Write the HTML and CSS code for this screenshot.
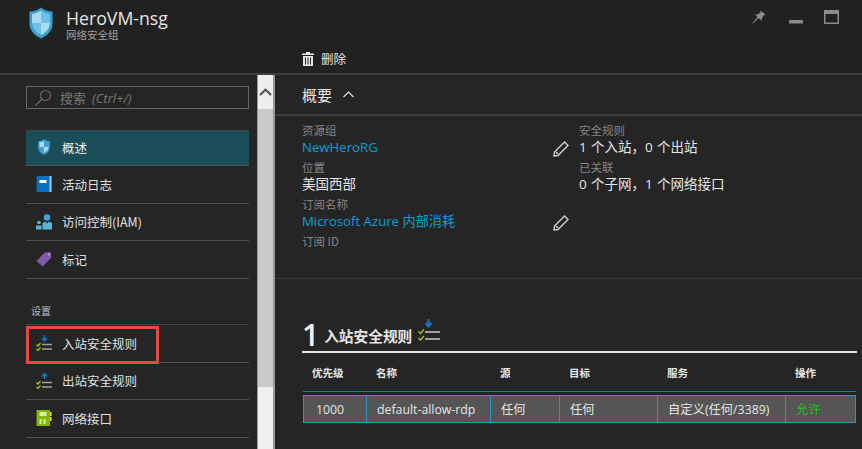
FILE: index.html
```html
<!DOCTYPE html>
<html lang="zh">
<head>
<meta charset="utf-8">
<title>HeroVM-nsg</title>
<link rel="stylesheet" href="styles.css">
</head>
<body>
<div class="app">
  <header class="top">
    <svg class="logo" width="26" height="32" viewBox="0 0 26 32"><path d="M13 0.5C10 3 6 4.500 1.500 4.500V17C1.500 24 7 28.500 13 31.500C19 28.500 24.500 24 24.500 17V4.500C20 4.500 16 3 13 0.500Z" fill="#3b9fd1"/><path d="M13 3.500C10.500 5.500 7.500 6.500 4 7V16H13ZM13 16V28C17 26 21.500 22.500 22 16Z" fill="#a9dcf0"/><path d="M13 3.500V16H22V7C18.500 6.500 15.500 5.500 13 3.500ZM4 16C4.500 22.500 9 26 13 28V16Z" fill="#6fc0e4"/></svg>
    <div class="titles">
      <div class="title">HeroVM-nsg</div>
      <div class="subtitle">网络安全组</div>
    </div>
    <div class="winbtns">
      <svg class="pin" width="14" height="14" viewBox="0 0 14 14"><path d="M8.500 0.500L13.500 4.500L11.500 5.500L9.500 9L10 11L6.500 8L1 13.500L0.500 13L5.500 7L3 4.500L5.500 4.500L8.500 2.500Z" fill="#8c8c8c"/></svg>
      <svg width="14" height="14" viewBox="0 0 14 14"><rect y="10" width="14" height="3.500" fill="#8c8c8c"/></svg>
      <svg width="15" height="14" viewBox="0 0 15 14"><path d="M0 0H15V14H0ZM1.500 4V12.500H13.500V4Z" fill="#8c8c8c" fill-rule="evenodd"/></svg>
    </div>
    <div class="cmd">
      <svg width="12" height="14" viewBox="0 0 12 14"><path d="M4 0H8V1.500H12V3H0V1.500H4ZM1 4H11V14H1ZM3 5.500V12.500H4V5.500ZM5.500 5.500V12.500H6.500V5.500ZM8 5.500V12.500H9V5.500Z" fill="#e6e6e6" fill-rule="evenodd"/></svg>
      <span>删除</span>
    </div>
  </header>
  <div class="main">
    <nav class="side">
      <div class="search">
        <svg width="18" height="18" viewBox="0 0 18 18"><circle cx="11.500" cy="6.500" r="5" fill="none" stroke="#666" stroke-width="1.200"/><path d="M8 10L1.500 16.500" stroke="#666" stroke-width="1.400"/></svg>
        <span>搜索</span><em>(Ctrl+/)</em>
      </div>
      <a class="item active">
        <svg class="ico" width="14" height="16" viewBox="0 0 26 32"><path d="M13 0.500C10 3 6 4.500 1.500 4.500V17C1.500 24 7 28.500 13 31.500C19 28.500 24.500 24 24.500 17V4.500C20 4.500 16 3 13 0.500Z" fill="#3b9fd1"/><path d="M13 3.500C10.500 5.500 7.500 6.500 4 7V16H13ZM13 16V28C17 26 21.500 22.500 22 16Z" fill="#a9dcf0"/></svg>
        <span>概述</span>
      </a>
      <a class="item">
        <svg class="ico" width="15" height="16" viewBox="0 0 15 16"><rect width="15" height="16" rx="1" fill="#0a6fc2"/><rect x="13" width="2" height="16" fill="#9cc9e8"/><rect x="3" y="4" width="7" height="3" fill="#fff"/></svg>
        <span>活动日志</span>
      </a>
      <a class="item">
        <svg class="ico" width="16" height="16" viewBox="0 0 16 16"><circle cx="11" cy="3.500" r="3.200" fill="#3da5d9"/><path d="M6.500 15.500V9L9 7.500L11 9.500L13 7.500L16 9V15.500Z" fill="#59b4d9"/><circle cx="3" cy="8.500" r="1.800" fill="#59b4d9"/><path d="M0 15.500V11.500H5.500V15.500Z" fill="#59b4d9"/></svg>
        <span>访问控制(IAM)</span>
      </a>
      <a class="item">
        <svg class="ico" width="17" height="16" viewBox="0 0 17 16"><path d="M0.500 10L9.500 0.800H16V7L7 16Z" fill="#7f58a6"/><circle cx="13.500" cy="3.200" r="1.100" fill="#c8b4da"/></svg>
        <span>标记</span>
      </a>
      <div class="section">设置</div>
      <a class="item flagged">
        <svg class="ico" width="16" height="16" viewBox="0 0 16 16"><path d="M8.500 0V5M6 3.200L8.500 5.800L11 3.200" fill="none" stroke="#1177cc" stroke-width="1.500"/><path d="M0.500 9.500L2 11L4.500 8M0.500 14L2 15.500L4.500 12.500" fill="none" stroke="#a8c41c" stroke-width="1.200"/><path d="M6 9.500H16M6 14H16" stroke="#a0a0a0" stroke-width="1.500"/></svg>
        <span>入站安全规则</span>
      </a>
      <a class="item">
        <svg class="ico" width="16" height="16" viewBox="0 0 16 16"><path d="M8.500 6V1M6 3.500L8.500 0.800L11 3.500" fill="none" stroke="#1177cc" stroke-width="1.500"/><path d="M0.500 9.500L2 11L4.500 8M0.500 14L2 15.500L4.500 12.500" fill="none" stroke="#a8c41c" stroke-width="1.200"/><path d="M6 9.500H16M6 14H16" stroke="#a0a0a0" stroke-width="1.500"/></svg>
        <span>出站安全规则</span>
      </a>
      <a class="item">
        <svg class="ico" width="15" height="16" viewBox="0 0 15 16"><rect width="13.500" height="16" fill="#7fba00"/><rect x="13.500" y="2" width="1.500" height="4" fill="#ffd24a"/><rect x="13.500" y="7" width="1.500" height="4" fill="#ffd24a"/><rect x="3" y="2" width="7" height="4" fill="#d9eab0"/><rect x="3" y="9" width="2" height="5" fill="#d9eab0"/><rect x="7" y="9" width="2" height="5" fill="#d9eab0"/></svg>
        <span>网络接口</span>
      </a>
    </nav>
    <div class="scroll">
      <div class="sc-up"><svg width="13" height="8" viewBox="0 0 13 8"><path d="M1 7L6.500 1.800L12 7" fill="none" stroke="#555" stroke-width="2.200"/></svg></div>
      <div class="sc-thumb"></div>
      <div class="sc-track"></div>
    </div>
    <section class="content">
      <div class="sumhead">
        <span>概要</span>
        <svg width="11" height="7" viewBox="0 0 11 7"><path d="M0.500 6L5.500 1L10.500 6" fill="none" stroke="#ddd" stroke-width="1.200"/></svg>
      </div>
      <div class="summary">
        <div class="col col-a">
          <div class="lab">资源组</div>
          <div class="val row"><a class="link">NewHeroRG</a><svg class="pen" width="16" height="16" viewBox="0 0 16 16"><path d="M11.500 1L15 4.500L5 14.500L1 15L1.500 11ZM3 11L5 13" fill="none" stroke="#d0d0d0" stroke-width="1.400"/></svg></div>
          <div class="lab">位置</div>
          <div class="val">美国西部</div>
          <div class="lab">订阅名称</div>
          <div class="val row"><a class="link">Microsoft Azure 内部消耗</a><svg class="pen" width="16" height="16" viewBox="0 0 16 16"><path d="M11.500 1L15 4.500L5 14.500L1 15L1.500 11ZM3 11L5 13" fill="none" stroke="#d0d0d0" stroke-width="1.400"/></svg></div>
          <div class="lab">订阅 ID</div>
        </div>
        <div class="col col-b">
          <div class="lab">安全规则</div>
          <div class="val">1 个入站，0 个出站</div>
          <div class="lab">已关联</div>
          <div class="val">0 个子网，1 个网络接口</div>
        </div>
      </div>
      <div class="rules">
        <div class="ruleshead">
          <span class="num">1</span>
          <span class="rt">入站安全规则</span>
          <svg width="22" height="23" viewBox="0 0 22 23"><path d="M10.500 0V7M7.500 4L10.500 7.500L13.500 4" fill="none" stroke="#1177cc" stroke-width="2"/><path d="M0.500 12.500L2.500 14.500L6 10.500M0.500 19L2.500 21L6 17" fill="none" stroke="#a8c41c" stroke-width="1.400"/><path d="M7 13H22M7 20H22" stroke="#a0a0a0" stroke-width="1.800"/></svg>
        </div>
        <table class="tbl">
          <colgroup><col class="c1"><col class="c2"><col class="c3"><col class="c4"><col class="c5"><col class="c6"></colgroup>
          <thead><tr><th>优先级</th><th>名称</th><th>源</th><th>目标</th><th>服务</th><th>操作</th></tr></thead>
          <tbody><tr class="gap"><td colspan="6"></td></tr><tr class="rule"><td>1000</td><td>default-allow-rdp</td><td>任何</td><td>任何</td><td>自定义(任何/3389)</td><td class="ok">允许</td></tr></tbody>
        </table>
      </div>
    </section>
  </div>
</div>
</body>
</html>
```
FILE: styles.css
```css
*, *::after { box-sizing: border-box; }
html, body { margin: 0; height: 100%; overflow: hidden; }
body { background: #252525; color: #e6e6e6; font-family: "Noto Sans CJK SC", "Noto Sans", sans-serif; font-size: 13px; }
.app { width: 862px; height: 449px; display: flex; flex-direction: column; }
.top { height: 75px; flex: none; background: #212121; border-bottom: 2px solid #3f3f3f; display: flex; padding: 7px 15px 0 28px; position: relative; }
.logo { flex: none; margin-right: 12px; }
.titles { flex: 1; padding-top: 1px; }
.title { font-family: "Open Sans", sans-serif; font-size: 17.700px; line-height: 21px; color: #e6e6e6; }
.subtitle { font-size: 10.500px; line-height: 12px; color: #a0a0a0; }
.winbtns { display: flex; gap: 21px; align-items: flex-start; padding-top: 3px; padding-right: 8px; }
.pin { margin-right: 2px; }
.cmd { position: absolute; left: 302px; top: 51px; display: flex; align-items: center; gap: 7px; font-size: 12.500px; line-height: 16px; color: #e6e6e6; }
.main { flex: 1; display: flex; min-height: 0; }
.side { width: 257px; flex: none; padding: 11px 8px 0 26px; background: #252525; }
.search { height: 23px; border: 1px solid #666; display: flex; align-items: center; padding-left: 7px; color: #777; font-size: 13px; }
.search svg { margin-right: 8px; }
.search em { font-family: "Open Sans", sans-serif; font-size: 13px; margin-left: 6px; }
.item { display: flex; align-items: center; height: 37.500px; padding-left: 10px; border-bottom: 1px solid #505050; font-size: 12.500px; color: #e0e0e0; position: relative; }
.item .ico { margin-right: 10px; width: 16px; flex: none; }
.active { background: #1b4d59; height: 36px; margin-top: 21px; padding-bottom: 2px; border-top: 1px solid #444; border-bottom-color: #555; color: #f2f2f2; }
.section { font-size: 10px; line-height: 14px; color: #bbb; padding: 25px 0 6.500px 5px; border-bottom: 1px solid #444; }
.flagged::after { content: ""; position: absolute; left: 0; top: 1px; width: 133px; height: 38px; border: 3px solid #e8483f; }
.scroll { width: 18px; flex: none; display: flex; flex-direction: column; background: #eee; border-left: 1px solid #999; border-right: 2px solid #999; }
.sc-up { height: 34px; background: #eee; display: flex; align-items: center; justify-content: center; }
.sc-thumb { height: 278px; background: #c9c9c9; }
.sc-track { flex: 1; background: #efefef; }
.content { flex: 1; min-width: 0; background: #252525; display: flex; flex-direction: column; padding-left: 27px; }
.sumhead { margin-left: -27px; padding: 10px 0 0 27px; height: 41px; border-bottom: 2px solid #3f3f3f; display: flex; gap: 11px; align-items: flex-start; font-size: 15px; line-height: 20px; color: #e6e6e6; }
.sumhead svg { margin-top: 6px; }
.summary { display: flex; height: 163px; margin-left: -27px; padding: 7px 0 0 27px; border-bottom: 1px solid #3a3a3a; }
.col-a { width: 277px; }
.lab { font-size: 11.500px; line-height: 15px; color: #868686; height: 16px; }
.val { font-size: 13.500px; line-height: 17px; height: 21px; color: #e6e6e6; font-family: "Open Sans", "Noto Sans CJK SC", sans-serif; word-spacing: 0.800px; }
.row { display: flex; justify-content: space-between; align-items: flex-start; }
.link { color: #0a9ed8; font-size: 13.200px; word-spacing: 0; }
.pen { flex: none; margin-right: 10px; margin-top: 2px; }
.rules { padding-top: 38px; width: 555px; }
.ruleshead { display: flex; align-items: flex-end; height: 36px; border-bottom: 2px solid #e8e8e8; padding-bottom: 1px; }
.num { font-family: "Open Sans", sans-serif; font-size: 30px; font-weight: 600; line-height: 30px; color: #f0f0f0; margin-right: 5px; }
.rt { font-size: 14.700px; font-weight: 700; line-height: 22px; margin-right: 6px; margin-bottom: 3px; color: #e6e6e6; }
.ruleshead svg { margin-bottom: 8px; }
.tbl { border-collapse: separate; border-spacing: 0; table-layout: fixed; width: 553px; margin-left: 1px; font-size: 12.300px; }
.c1 { width: 63px; } .c2 { width: 124px; } .c3 { width: 69px; } .c4 { width: 98px; } .c5 { width: 128px; } .c6 { width: 71px; }
.tbl th { height: 39px; text-align: left; padding: 1px 0 0 10px; font-size: 10.500px; font-weight: 700; color: #e6e6e6; border-bottom: 1px solid #1d7f9e; }
.tbl th:first-child { padding-left: 9px; }
.gap td { height: 3px; padding: 0; }
.rule td { height: 28px; background: #555; border: 1px solid #1f9ac0; border-right: 0; padding: 0 0 0 10px; color: #e6e6e6; font-family: "Open Sans", "Noto Sans CJK SC", sans-serif; }
.rule td:first-child { padding-left: 12px; }
.rule td:last-child { border-right: 1px solid #1f9ac0; }
.rule .ok { color: #1fc41f; }
```
